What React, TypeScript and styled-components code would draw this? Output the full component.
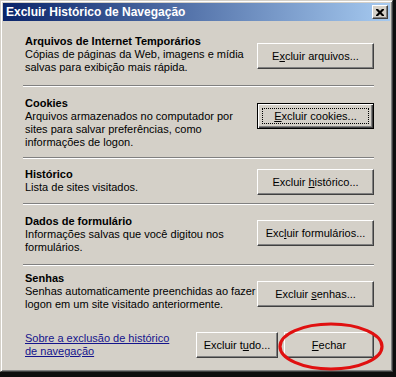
import React from "react";
import styled, { createGlobalStyle, css } from "styled-components";

const Global = createGlobalStyle`
  html, body { margin: 0; padding: 0; background: #0e0e0e; }
  body { width: 396px; height: 377px; overflow: hidden; }
  * { box-sizing: border-box; }
`;

const FONT = `"Liberation Sans", Arial, sans-serif`;

const Window = styled.div`
  width: 393px;
  height: 372px;
  background: #d4d0c8;
  border: 1px solid;
  border-color: #d4d0c8 #404040 #404040 #d4d0c8;
  box-shadow: inset 1px 1px #ffffff, inset -1px -1px #808080;
  padding: 2px;
  font-family: ${FONT};
  font-size: 11px;
  color: #000;
  display: flex;
  flex-direction: column;
`;

const TitleBar = styled.div`
  height: 18px;
  flex: none;
  background: linear-gradient(to right, #0a246a, #a6caf0);
  display: flex;
  align-items: center;
  justify-content: space-between;
  padding: 0 2px 0 3px;
`;

const TitleText = styled.span`
  color: #fff;
  font-weight: bold;
  font-size: 12px;
  white-space: nowrap;
`;

const CloseBtn = styled.div`
  width: 16px;
  height: 14px;
  background: #d4d0c8;
  border: 1px solid;
  border-color: #fff #404040 #404040 #fff;
  box-shadow: inset -1px -1px #808080;
  display: flex;
  align-items: center;
  justify-content: center;
`;

const Content = styled.div`
  flex: 1;
  display: flex;
  flex-direction: column;
  padding: 0 16px 0 20px;
`;

const Section = styled.div`
  display: flex;
  justify-content: space-between;
  align-items: flex-start;
`;

const TextCol = styled.div<{ $pt: number; $pb: number }>`
  margin-top: ${(p) => p.$pt}px;
  margin-bottom: ${(p) => p.$pb}px;
  padding-left: 2px;
  white-space: nowrap;
`;

const Heading = styled.div`
  font-weight: bold;
  font-size: 11px;
  line-height: 14px;
`;

const Desc = styled.div`
  font-size: 11px;
  line-height: 13px;
`;

const Separator = styled.div`
  height: 2px;
  border-top: 1px solid #808080;
  border-bottom: 1px solid #ffffff;
`;

const Btn = styled.button<{ $w: number; $mt?: number; $default?: boolean }>`
  flex: none;
  width: ${(p) => p.$w}px;
  height: 26px;
  margin-top: ${(p) => p.$mt ?? 0}px;
  font-family: ${FONT};
  font-size: 11px;
  color: #000;
  background: #d4d0c8;
  border: 1px solid;
  border-color: #ffffff #404040 #404040 #ffffff;
  box-shadow: inset -1px -1px #808080;
  padding: 0;
  position: relative;
  white-space: nowrap;
  ${(p) =>
    p.$default &&
    css`
      border-color: #000;
      box-shadow: inset 1px 1px #ffffff, inset -1px -1px #404040,
        inset -2px -2px #808080;
      &::after {
        content: "";
        position: absolute;
        inset: 4px;
        border: 1px dotted #000;
      }
    `}
`;

const Footer = styled.div`
  display: flex;
  align-items: flex-start;
  margin-top: 21px;
`;

const Link = styled.a`
  color: #14148c;
  text-decoration: underline;
  line-height: 13px;
  padding-left: 2px;
  white-space: nowrap;
  flex: 1;
  cursor: pointer;
`;

const FooterButtons = styled.div`
  display: flex;
  gap: 6px;
`;

const Highlight = styled.div`
  position: relative;
`;

const Ellipse = styled.svg`
  position: absolute;
  left: -6px;
  top: -10px;
  width: 106px;
  height: 50px;
  pointer-events: none;
  overflow: visible;
`;

type S = {
  title: string;
  lines: string[];
  btn: React.ReactNode;
  pt: number;
  pb: number;
  bt: number;
  def?: boolean;
};

const sections: S[] = [
  {
    title: "Arquivos de Internet Temporários",
    lines: ["Cópias de páginas da Web, imagens e mídia", "salvas para exibição mais rápida."],
    btn: (<>E<u>x</u>cluir arquivos...</>),
    pt: 13, pb: 11, bt: 22,
  },
  {
    title: "Cookies",
    lines: [
      "Arquivos armazenados no computador por",
      "sites para salvar preferências, como",
      "informações de logon.",
    ],
    btn: (<><u>E</u>xcluir cookies...</>),
    pt: 9, pb: 8, bt: 16, def: true,
  },
  {
    title: "Histórico",
    lines: ["Lista de sites visitados."],
    btn: (<>Excluir <u>h</u>istórico...</>),
    pt: 8, pb: 9, bt: 10,
  },
  {
    title: "Dados de formulário",
    lines: ["Informações salvas que você digitou nos", "formulários."],
    btn: (<>Exc<u>l</u>uir formulários...</>),
    pt: 9, pb: 10, bt: 15,
  },
  {
    title: "Senhas",
    lines: [
      "Senhas automaticamente preenchidas ao fazer",
      "logon em um site visitado anteriormente.",
    ],
    btn: (<>Excluir <u>s</u>enhas...</>),
    pt: 5, pb: 0, bt: 15,
  },
];

export default function App() {
  return (
    <>
      <Global />
      <Window>
        <TitleBar>
          <TitleText>Excluir Histórico de Navegação</TitleText>
          <CloseBtn>
            <svg width="8" height="7" viewBox="0 0 8 7">
              <path
                d="M0 0h2l2 2 2-2h2v1l-2.5 2.5L8 6v1H6L4 5 2 7H0V6l2.5-2.5L0 1z"
                fill="#000"
              />
            </svg>
          </CloseBtn>
        </TitleBar>
        <Content>
          {sections.map((s, i) => (
            <React.Fragment key={s.title}>
              <Section>
                <TextCol $pt={s.pt} $pb={s.pb}>
                  <Heading>{s.title}</Heading>
                  {s.lines.map((l) => (
                    <Desc key={l}>{l}</Desc>
                  ))}
                </TextCol>
                <Btn $w={117} $mt={s.bt} $default={s.def}>
                  {s.btn}
                </Btn>
              </Section>
              {i < sections.length - 1 && <Separator />}
            </React.Fragment>
          ))}
          <Footer>
            <Link>
              Sobre a exclusão de histórico
              <br />
              de navegação
            </Link>
            <FooterButtons>
              <Btn $w={82}>
                Excluir t<u>u</u>do...
              </Btn>
              <Highlight>
                <Btn $w={90}>
                  <u>F</u>echar
                </Btn>
                <Ellipse viewBox="0 0 106 50">
                  <ellipse
                    cx="53"
                    cy="24.5"
                    rx="51"
                    ry="22.5"
                    fill="none"
                    stroke="#e01010"
                    strokeWidth="3.2"
                  />
                </Ellipse>
              </Highlight>
            </FooterButtons>
          </Footer>
        </Content>
      </Window>
    </>
  );
}
